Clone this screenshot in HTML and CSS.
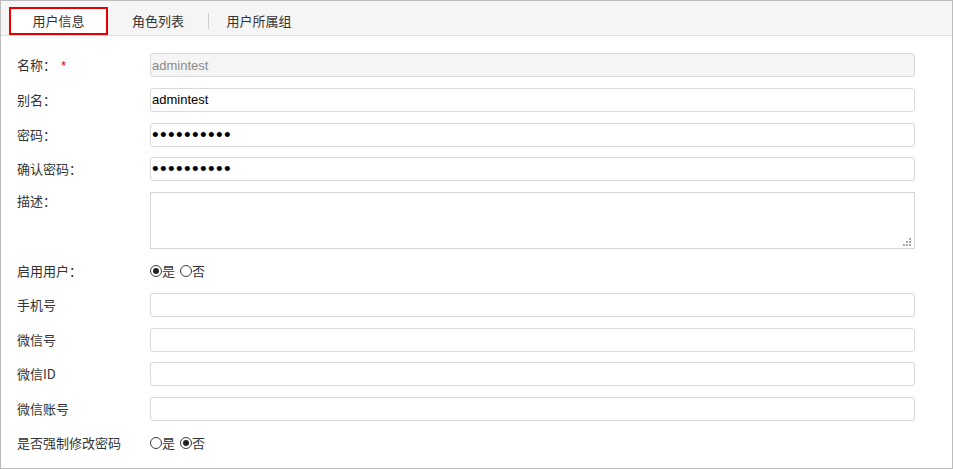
FILE: index.html
```html
<!DOCTYPE html>
<html lang="zh-CN">
<head>
<meta charset="utf-8">
<title>用户信息</title>
<link rel="stylesheet" href="styles.css">
</head>
<body>
<div class="panel">
  <div class="tabs">
    <div class="tab active">用户信息</div>
    <div class="tab">角色列表</div>
    <div class="sep"></div>
    <div class="tab">用户所属组</div>
  </div>
  <form class="form">
    <label class="lbl">名称：<span class="req">*</span></label>
    <input class="inp" type="text" value="admintest" disabled>

    <label class="lbl">别名：</label>
    <input class="inp" type="text" value="admintest">

    <label class="lbl">密码：</label>
    <input class="inp pwd" type="password" value="1234567890">

    <label class="lbl">确认密码：</label>
    <input class="inp pwd" type="password" value="1234567890">

    <label class="lbl top">描述：</label>
    <div class="ta-wrap">
      <textarea class="ta"></textarea>
      <svg class="grip" width="9" height="9" viewBox="0 0 9 9"><rect x="6" y="0" width="2" height="2"/><rect x="3" y="3" width="2" height="2"/><rect x="6" y="3" width="2" height="2"/><rect x="0" y="6" width="2" height="2"/><rect x="3" y="6" width="2" height="2"/><rect x="6" y="6" width="2" height="2"/></svg>
    </div>

    <label class="lbl">启用用户：</label>
    <div class="radios">
      <span class="radio on"></span><span class="rtxt">是</span>
      <span class="radio"></span><span class="rtxt">否</span>
    </div>

    <label class="lbl">手机号</label>
    <input class="inp" type="text">

    <label class="lbl">微信号</label>
    <input class="inp" type="text">

    <label class="lbl">微信ID</label>
    <input class="inp" type="text">

    <label class="lbl">微信账号</label>
    <input class="inp" type="text">

    <label class="lbl">是否强制修改密码</label>
    <div class="radios">
      <span class="radio"></span><span class="rtxt">是</span>
      <span class="radio on"></span><span class="rtxt">否</span>
    </div>
  </form>
</div>
</body>
</html>
```

FILE: styles.css
```css
html, body {
  margin: 0;
  padding: 0;
  background: #fff;
}
body {
  font-family: "Noto Sans CJK SC", "Liberation Sans", sans-serif;
  font-size: 13px;
  color: #333;
}
.panel {
  box-sizing: border-box;
  width: 953px;
  height: 469px;
  border: 1px solid #bcbcbc;
}
.tabs {
  display: flex;
  align-items: flex-start;
  height: 34px;
  background: #f5f5f5;
  border-bottom: 1px solid #dedede;
}
.tab {
  box-sizing: border-box;
  width: 100px;
  height: 28px;
  margin-top: 6px;
  display: flex;
  align-items: center;
  justify-content: center;
  line-height: 16px;
  color: #333;
}
.tab.active {
  width: 99px;
  margin-left: 8px;
  border: 2px solid #e60000;
  background: #fff;
}
.sep {
  width: 1px;
  height: 16px;
  margin-top: 12px;
  background: #cfcfcf;
}
.form {
  display: grid;
  grid-template-columns: 133px 765px;
  grid-template-rows: 24px 24px 24px 24px 57px 22px 24px 24px 24px 24px 22px;
  row-gap: 10.8px;
  padding: 17px 0 0 16px;
  margin: 0;
}
.lbl {
  align-self: center;
  line-height: 16px;
  white-space: nowrap;
  color: #333;
}
.lbl.top {
  align-self: start;
  padding-top: 1px;
}
.req {
  color: #e60000;
  font-family: "Liberation Sans", sans-serif;
  margin-left: 5px;
}
.inp {
  box-sizing: border-box;
  width: 765px;
  height: 24px;
  margin: 0;
  padding: 0 1px;
  border: 1px solid #d9d9d9;
  border-radius: 3px;
  background: #fff;
  font-family: "Liberation Sans", sans-serif;
  font-size: 13px;
  color: #000;
  outline: none;
}
.inp:disabled {
  background: #f5f5f5;
  color: #8a8a8a;
}
.inp.pwd {
  font-size: 19px;
  letter-spacing: 1.35px;
}
.ta-wrap {
  position: relative;
  height: 57px;
}
.ta {
  box-sizing: border-box;
  display: block;
  width: 765px;
  height: 57px;
  margin: 0;
  border: 1px solid #d6d6d6;
  border-radius: 0;
  resize: none;
  outline: none;
  background: #fff;
}
.grip {
  position: absolute;
  right: 3px;
  bottom: 2px;
  fill: #a8a8a8;
}
.radios {
  display: flex;
  align-items: center;
  line-height: 16px;
}
.radio {
  box-sizing: border-box;
  width: 12px;
  height: 12px;
  border: 1px solid #3a3a3a;
  border-radius: 50%;
  display: flex;
  align-items: center;
  justify-content: center;
  background: #fff;
}
.radio.on::after {
  content: "";
  width: 6px;
  height: 6px;
  border-radius: 50%;
  background: #222;
}
.rtxt {
  margin-right: 5px;
  color: #333;
}
```
